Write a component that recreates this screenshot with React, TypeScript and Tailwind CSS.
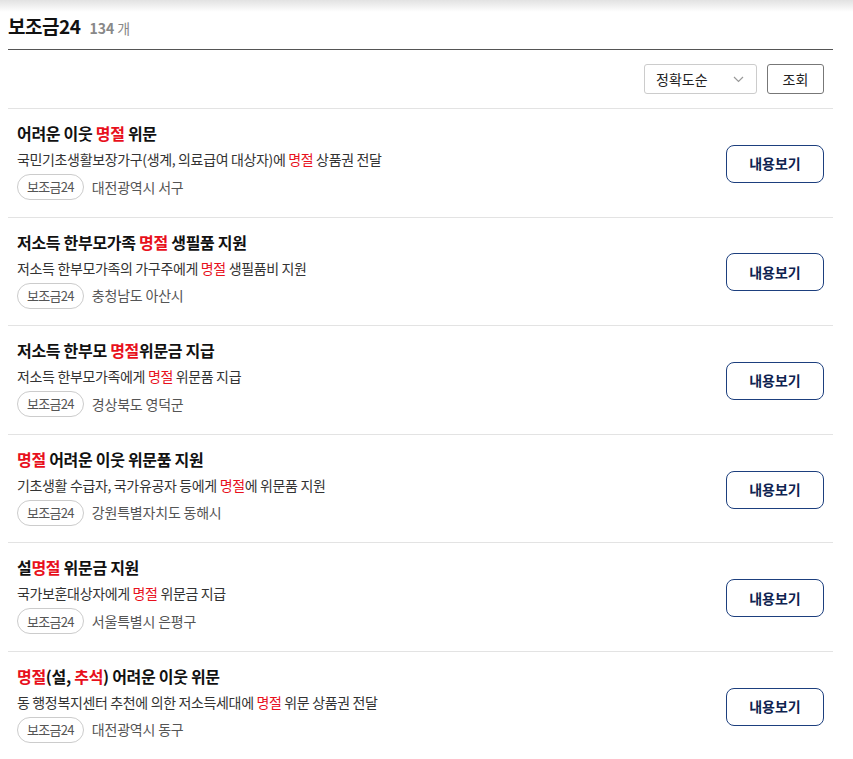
import React from "react";

type Seg = { t: string; r?: boolean };
type Item = { title: Seg[]; desc: Seg[]; region: string };

const items: Item[] = [
  {
    title: [{ t: "어려운 이웃 " }, { t: "명절", r: true }, { t: " 위문" }],
    desc: [{ t: "국민기초생활보장가구(생계, 의료급여 대상자)에 " }, { t: "명절", r: true }, { t: " 상품권 전달" }],
    region: "대전광역시 서구",
  },
  {
    title: [{ t: "저소득 한부모가족 " }, { t: "명절", r: true }, { t: " 생필품 지원" }],
    desc: [{ t: "저소득 한부모가족의 가구주에게 " }, { t: "명절", r: true }, { t: " 생필품비 지원" }],
    region: "충청남도 아산시",
  },
  {
    title: [{ t: "저소득 한부모 " }, { t: "명절", r: true }, { t: "위문금 지급" }],
    desc: [{ t: "저소득 한부모가족에게 " }, { t: "명절", r: true }, { t: " 위문품 지급" }],
    region: "경상북도 영덕군",
  },
  {
    title: [{ t: "명절", r: true }, { t: " 어려운 이웃 위문품 지원" }],
    desc: [{ t: "기초생활 수급자, 국가유공자 등에게 " }, { t: "명절", r: true }, { t: "에 위문품 지원" }],
    region: "강원특별자치도 동해시",
  },
  {
    title: [{ t: "설" }, { t: "명절", r: true }, { t: " 위문금 지원" }],
    desc: [{ t: "국가보훈대상자에게 " }, { t: "명절", r: true }, { t: " 위문금 지급" }],
    region: "서울특별시 은평구",
  },
  {
    title: [{ t: "명절", r: true }, { t: "(설, " }, { t: "추석", r: true }, { t: ") 어려운 이웃 위문" }],
    desc: [{ t: "동 행정복지센터 추천에 의한 저소득세대에 " }, { t: "명절", r: true }, { t: " 위문 상품권 전달" }],
    region: "대전광역시 동구",
  },
];

function Segs({ segs }: { segs: Seg[] }) {
  return (
    <>
      {segs.map((s, i) =>
        s.r ? (
          <span key={i} className="text-[#e8101c]">
            {s.t}
          </span>
        ) : (
          <span key={i}>{s.t}</span>
        )
      )}
    </>
  );
}

export default function App() {
  return (
    <div
      className="min-h-[759px] bg-white text-[#111]"
      style={{ fontFamily: '"Noto Sans CJK KR", "Noto Sans", sans-serif' }}
    >
      <div className="h-[12px] bg-gradient-to-b from-[#e2e2e2] to-white" />
      <div className="mx-2 w-[825px]">
        <div className="flex items-baseline gap-[9px] pt-[2px] h-[38px] border-b border-[#555]">
          <h2 className="text-[19px] font-bold tracking-[-0.5px] leading-[24px] text-[#111]">보조금24</h2>
          <span className="text-[14px] font-bold text-[#888] leading-[20px]">
            134 <span className="font-normal">개</span>
          </span>
        </div>
        <div className="flex justify-end items-center gap-[10px] h-[59px] pr-[9px] border-b border-[#e3e3e3]">
          <div className="flex items-center justify-between w-[113px] h-[30px] border border-[#ccc] rounded-[3px] pl-[11px] pr-[12px] text-[14px] text-[#222]">
            <span>정확도순</span>
            <svg width="11" height="7" viewBox="0 0 11 7" fill="none">
              <path d="M1 1l4.5 4.5L10 1" stroke="#999" strokeWidth="1.2" />
            </svg>
          </div>
          <button className="w-[57px] h-[30px] border border-[#777] rounded-[3px] text-[14px] text-[#222] bg-white">
            조회
          </button>
        </div>
        {items.map((it, i) => (
          <div
            key={i}
            className="flex items-center justify-between pl-[9px] pr-[9px] h-[108.6px] border-b border-[#e3e3e3]"
          >
            <div className="flex flex-col self-start pt-[12px]">
              <div className="text-[16px] font-bold leading-[24px] tracking-[-0.3px] text-[#111]">
                <Segs segs={it.title} />
              </div>
              <div className="text-[14px] leading-[22px] text-[#333] tracking-[-0.35px] mt-[3px]">
                <Segs segs={it.desc} />
              </div>
              <div className="flex items-center gap-[8px] mt-[4px]">
                <span className="h-[26px] px-[9px] rounded-full border border-[#ccc] text-[13px] text-[#555] flex items-center tracking-[-0.7px]">
                  보조금24
                </span>
                <span className="text-[14px] text-[#555] tracking-[-0.2px]">{it.region}</span>
              </div>
            </div>
            <button className="w-[98px] h-[38px] mt-[2px] rounded-[8px] border border-[#1d3f7e] bg-white text-[14px] font-bold text-[#0e2350]">
              내용보기
            </button>
          </div>
        ))}
      </div>
    </div>
  );
}
